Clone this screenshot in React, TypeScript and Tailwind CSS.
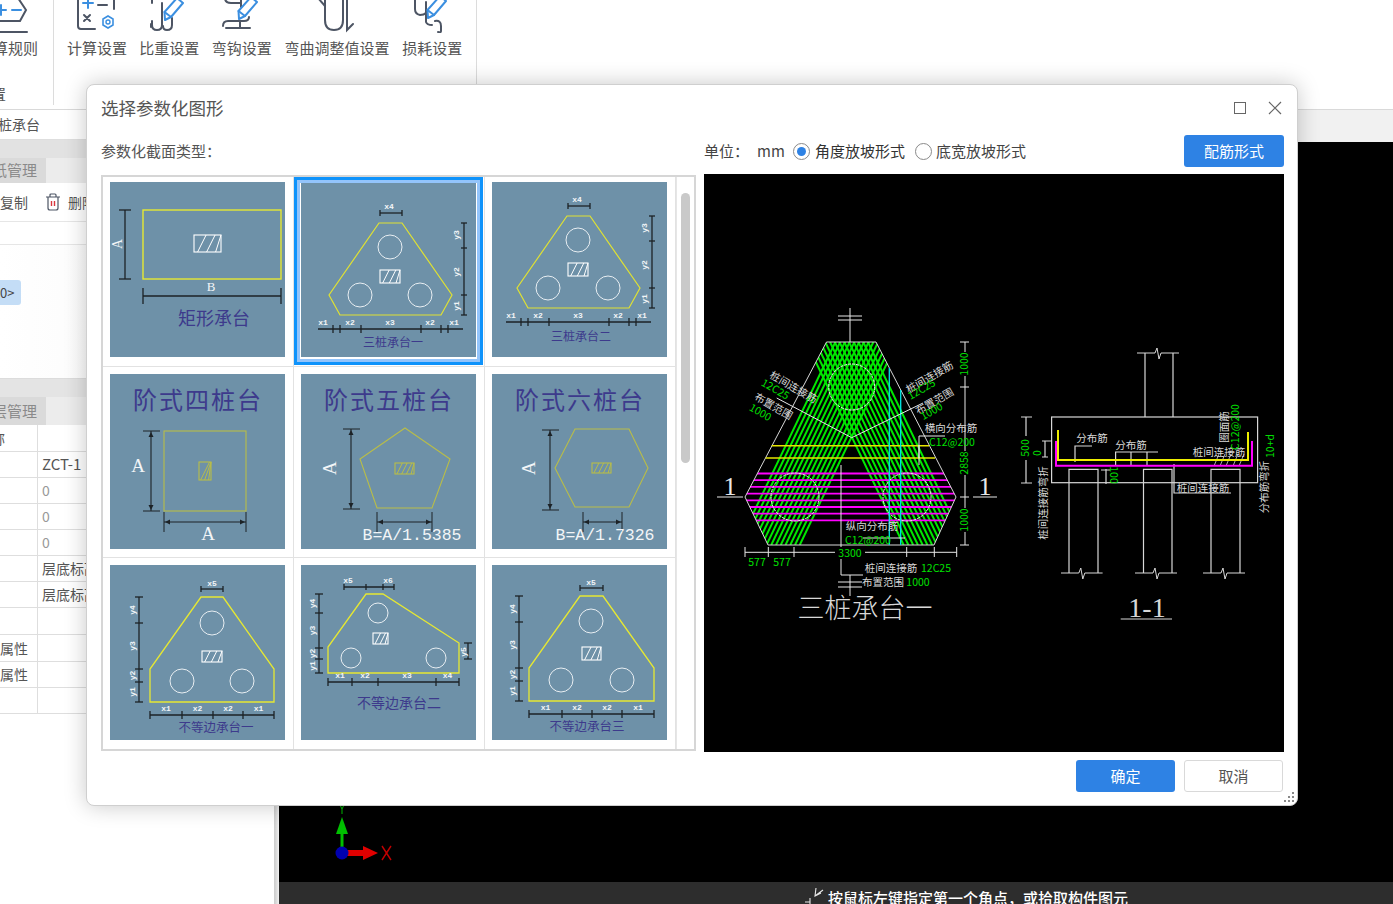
import React from 'react';

type Pt = [number, number];

const pts = (list: Pt[]) => list.map((p) => p.join(',')).join(' ');
const DIM = '#1c2226';
const TITLE = '#3d3a8c';
const SERIF = "'Liberation Serif','Noto Sans CJK SC',serif";
const MONO = "'Liberation Mono','Noto Sans CJK SC',monospace";

const Hatch = ({ x, y, w, h, color = '#fff', n = 3 }: { x: number; y: number; w: number; h: number; color?: string; n?: number }) => (
  <g stroke={color} fill="none">
    <rect x={x} y={y} width={w} height={h} strokeWidth={1.1} />
    {Array.from({ length: n }).map((_, i) => {
      const sx = x + ((i + 0.4) * w) / n;
      return <line key={i} x1={sx} y1={y + h} x2={Math.min(sx + h * 0.5, x + w)} y2={y} strokeWidth={1} />;
    })}
  </g>
);

const HDim = ({ xs, y, t = 6, x1, x2 }: { xs: number[]; y: number; t?: number; x1?: number; x2?: number }) => (
  <g stroke={DIM} strokeWidth={1.3}>
    <line x1={x1 ?? xs[0]} y1={y} x2={x2 ?? xs[xs.length - 1]} y2={y} />
    {xs.map((x) => (
      <line key={x} x1={x} y1={y - t} x2={x} y2={y + t} />
    ))}
  </g>
);

const VDim = ({ ys, x, t = 6 }: { ys: number[]; x: number; t?: number }) => (
  <g stroke={DIM} strokeWidth={1.3}>
    <line x1={x} y1={ys[0]} x2={x} y2={ys[ys.length - 1]} />
    {ys.map((y) => (
      <line key={y} x1={x - t} y1={y} x2={x + t} y2={y} />
    ))}
  </g>
);

const Small = ({ x, y, children, rot }: { x: number; y: number; children: React.ReactNode; rot?: boolean }) => (
  <text
    x={x}
    y={y}
    fontSize={8}
    fontWeight={700}
    fontFamily={MONO}
    fill="#f2f5f7"
    textAnchor="middle"
    dominantBaseline="middle"
    transform={rot ? `rotate(-90 ${x} ${y})` : undefined}
  >
    {children}
  </text>
);

const Title = ({ x, y, size, children }: { x: number; y: number; size: number; children: string }) => (
  <text x={x} y={y} fontSize={size} fill={TITLE} textAnchor="middle" dominantBaseline="middle">
    {children}
  </text>
);

const Tile = ({ children }: { children: React.ReactNode }) => (
  <svg viewBox="0 0 175 175" className="block h-[175px] w-[175px] bg-[#6e91a8]">
    {children}
  </svg>
);

const Circles = ({ list, r = 12 }: { list: Pt[]; r?: number }) => (
  <g fill="none" stroke="#e8eef2" strokeWidth={1}>
    {list.map(([cx, cy]) => (
      <circle key={cx} cx={cx} cy={cy} r={r} />
    ))}
  </g>
);

const RectTile = () => (
  <Tile>
    <rect x={33} y={28} width={138} height={69} fill="none" stroke="#e6e832" strokeWidth={1.4} />
    <Hatch x={84} y={53} w={27} h={17} />
    <VDim ys={[28, 97]} x={15} t={6} />
    <HDim xs={[33, 171]} y={114} t={8} />
    <text x={9} y={62} fontSize={14} fontFamily={SERIF} fill="#f2f5f7" textAnchor="middle" dominantBaseline="middle" transform="rotate(-90 9 62)">A</text>
    <text x={101} y={106} fontSize={13} fontFamily={SERIF} fill="#f2f5f7" textAnchor="middle" dominantBaseline="middle">B</text>
    <Title x={104} y={138} size={18}>矩形承台</Title>
  </Tile>
);

const ThreePile = ({ dx, dy, label }: { dx: number; dy: number; label: string }) => (
  <Tile>
    <g transform={`translate(${dx} ${dy})`}>
      <polygon points={pts([[78, 41], [101, 41], [151, 113], [140, 133], [39, 133], [28, 113]])} fill="none" stroke="#e0e232" strokeWidth={1.2} />
      <Circles list={[[89, 65], [59, 113], [119, 113]]} />
      <Hatch x={79} y={88} w={20} h={13} />
      <HDim xs={[79, 101]} y={31} t={3} />
      <Small x={88} y={25}>x4</Small>
      <VDim ys={[41, 66, 113, 133]} x={163} t={3} />
      <Small x={156} y={53} rot>y3</Small>
      <Small x={156} y={90} rot>y2</Small>
      <Small x={156} y={124} rot>y1</Small>
      <HDim xs={[32, 39, 60, 120, 140, 147]} y={147} t={4} x1={17} x2={162} />
      <Small x={22} y={141}>x1</Small>
      <Small x={49} y={141}>x2</Small>
      <Small x={89} y={141}>x3</Small>
      <Small x={129} y={141}>x2</Small>
      <Small x={153} y={141}>x1</Small>
    </g>
    <Title x={92 + dx} y={dy ? 156 : 162} size={12}>{label}</Title>
  </Tile>
);

const Arrow = ({ x1, y1, x2, y2 }: { x1: number; y1: number; x2: number; y2: number }) => {
  const vertical = x1 === x2;
  return (
    <g>
      <line x1={x1} y1={y1} x2={x2} y2={y2} stroke={DIM} strokeWidth={1.1} />
      {vertical ? (
        <>
          <polygon points={pts([[x1, y1 + 1], [x1 - 2.5, y1 + 6], [x1 + 2.5, y1 + 6]])} fill={DIM} />
          <polygon points={pts([[x2, y2 - 1], [x2 - 2.5, y2 - 6], [x2 + 2.5, y2 - 6]])} fill={DIM} />
        </>
      ) : (
        <>
          <polygon points={pts([[x1 + 1, y1], [x1 + 6, y1 - 2.5], [x1 + 6, y1 + 2.5]])} fill={DIM} />
          <polygon points={pts([[x2 - 1, y2], [x2 - 6, y2 - 2.5], [x2 - 6, y2 + 2.5]])} fill={DIM} />
        </>
      )}
    </g>
  );
};

const Stepped = ({ title, shape, hatch, tall, aRot, aX, hx, label }: {
  title: string;
  shape: React.ReactNode;
  hatch: React.ReactNode;
  tall: [number, number, number];
  aRot: boolean;
  aX: number;
  hx: [number, number];
  label: React.ReactNode;
}) => (
  <Tile>
    <text x={88} y={29} fontSize={24} fontFamily={SERIF} fill={TITLE} textAnchor="middle" dominantBaseline="middle" letterSpacing={2}>{title}</text>
    {shape}
    {hatch}
    <Arrow x1={tall[0]} y1={tall[1]} x2={tall[0]} y2={tall[2]} />
    <line x1={tall[0] - 8} y1={tall[1]} x2={tall[0] + 9} y2={tall[1]} stroke={DIM} />
    <line x1={tall[0] - 8} y1={tall[2]} x2={tall[0] + 9} y2={tall[2]} stroke={DIM} />
    <text x={aX} y={94} fontSize={19} fontFamily={SERIF} fill="#f2f5f7" textAnchor="middle" dominantBaseline="middle" transform={aRot ? `rotate(-90 ${aX} 94)` : undefined}>A</text>
    <Arrow x1={hx[0]} y1={148} x2={hx[1]} y2={148} />
    <line x1={hx[0]} y1={138} x2={hx[0]} y2={158} stroke={DIM} />
    <line x1={hx[1]} y1={138} x2={hx[1]} y2={158} stroke={DIM} />
    {label}
  </Tile>
);

const FormulaLabel = ({ children, x }: { children: string; x: number }) => (
  <text x={x} y={162} fontSize={16.5} fontFamily={MONO} fill="#f2f5f7" textAnchor="middle" dominantBaseline="middle">{children}</text>
);

const YELLOW_DIM = '#b9bd48';

const UnequalPile = ({ poly, circles, hatch, r = 12, top, left, bottom, title, titleAt, titleSize = 12.5, extra, topLabels, bottomLabels, leftLabels }: {
  poly: Pt[];
  circles: Pt[];
  hatch: [number, number, number, number];
  r?: number;
  top: { xs: number[]; y: number };
  left: { ys: number[]; x: number };
  bottom: { xs: number[]; y: number };
  title: string;
  titleAt: Pt;
  titleSize?: number;
  extra?: React.ReactNode;
  topLabels: [number, number, string][];
  bottomLabels: string[];
  leftLabels: string[];
}) => (
  <Tile>
    <polygon points={pts(poly)} fill="none" stroke="#e6e832" strokeWidth={1.3} />
    <Circles list={circles} r={r} />
    <Hatch x={hatch[0]} y={hatch[1]} w={hatch[2]} h={hatch[3]} />
    <HDim xs={top.xs} y={top.y} t={3} />
    {topLabels.map(([x, y, s]) => (
      <Small key={x} x={x} y={y}>{s}</Small>
    ))}
    <VDim ys={left.ys} x={left.x} t={4} />
    {leftLabels.map((s, i) => (
      <Small key={s + i} x={left.x - 6} y={(left.ys[i] + left.ys[i + 1]) / 2} rot>{s}</Small>
    ))}
    <HDim xs={bottom.xs} y={bottom.y} t={4} />
    {bottomLabels.map((s, i) => (
      <Small key={s + i} x={(bottom.xs[i] + bottom.xs[i + 1]) / 2} y={bottom.y - 6}>{s}</Small>
    ))}
    {extra}
    <Title x={titleAt[0]} y={titleAt[1]} size={titleSize}>{title}</Title>
  </Tile>
);

const tiles: React.ReactNode[] = [
  <RectTile key="rect" />,
  <ThreePile key="three1" dx={0} dy={0} label="三桩承台一" />,
  <ThreePile key="three2" dx={-3} dy={-7} label="三桩承台二" />,
  <Stepped
    key="four"
    title="阶式四桩台"
    shape={<rect x={54} y={57} width={82} height={80} fill="none" stroke={YELLOW_DIM} strokeWidth={1.1} />}
    hatch={<Hatch x={89} y={88} w={12} h={18} color={YELLOW_DIM} n={3} />}
    tall={[41, 57, 137]}
    aRot={false}
    aX={28}
    hx={[54, 136]}
    label={<text x={98} y={162} fontSize={19} fontFamily={SERIF} fill="#f2f5f7" textAnchor="middle" dominantBaseline="middle">A</text>}
  />,
  <Stepped
    key="five"
    title="阶式五桩台"
    shape={<polygon points={pts([[104, 54], [149, 85], [131, 134], [76, 134], [59, 85]])} fill="none" stroke={YELLOW_DIM} strokeWidth={1.1} />}
    hatch={<Hatch x={94} y={89} w={19} h={11} color={YELLOW_DIM} n={4} />}
    tall={[50, 55, 135]}
    aRot
    aX={31}
    hx={[76, 131]}
    label={<FormulaLabel x={111}>B=A/1.5385</FormulaLabel>}
  />,
  <Stepped
    key="six"
    title="阶式六桩台"
    shape={<polygon points={pts([[63, 94], [83, 55], [137, 55], [156, 94], [137, 133], [83, 133]])} fill="none" stroke={YELLOW_DIM} strokeWidth={1.1} />}
    hatch={<Hatch x={100} y={89} w={19} h={10} color={YELLOW_DIM} n={4} />}
    tall={[58, 56, 136]}
    aRot
    aX={39}
    hx={[91, 130]}
    label={<FormulaLabel x={113}>B=A/1.7326</FormulaLabel>}
  />,
  <UnequalPile
    key="un1"
    poly={[[91, 32], [113, 32], [164, 104], [164, 137], [40, 137], [40, 104]]}
    circles={[[102, 58], [72, 116], [132, 116]]}
    hatch={[92, 86, 20, 11]}
    top={{ xs: [91, 113], y: 24 }}
    topLabels={[[102, 19, 'x5']]}
    left={{ ys: [32, 58, 104, 117, 137], x: 29 }}
    leftLabels={['y4', 'y3', 'y2', 'y1']}
    bottom={{ xs: [40, 72, 103, 133, 164], y: 150 }}
    bottomLabels={['x1', 'x2', 'x2', 'x1']}
    title="不等边承台一"
    titleAt={[106, 164]}
  />,
  <UnequalPile
    key="un2"
    poly={[[65, 29], [82, 29], [158, 78], [158, 108], [27, 108], [27, 82]]}
    circles={[[77, 48], [50, 93], [135, 93]]}
    r={10}
    hatch={[72, 68, 15, 11]}
    top={{ xs: [43, 65, 82, 93], y: 22 }}
    topLabels={[[47, 16, 'x5'], [87, 16, 'x6']]}
    left={{ ys: [29, 48, 83, 94, 108], x: 18 }}
    leftLabels={['y4', 'y3', 'y2', 'y1']}
    bottom={{ xs: [27, 51, 77, 135, 158], y: 117 }}
    bottomLabels={['x1', 'x2', 'x3', 'x4']}
    title="不等边承台二"
    titleAt={[98, 139]}
    titleSize={14}
    extra={
      <g>
        <VDim ys={[78, 94]} x={167} t={4} />
        <Small x={163} y={87} rot>y5</Small>
      </g>
    }
  />,
  <UnequalPile
    key="un3"
    poly={[[88, 31], [111, 31], [162, 103], [162, 136], [37, 136], [37, 103]]}
    circles={[[99, 56], [69, 115], [130, 115]]}
    hatch={[90, 82, 19, 13]}
    top={{ xs: [88, 111], y: 23 }}
    topLabels={[[99, 18, 'x5']]}
    left={{ ys: [31, 57, 103, 116, 136], x: 27 }}
    leftLabels={['y4', 'y3', 'y2', 'y1']}
    bottom={{ xs: [37, 70, 100, 130, 162], y: 149 }}
    bottomLabels={['x1', 'x2', 'x2', 'x1']}
    title="不等边承台三"
    titleAt={[95, 163]}
  />,
];

// CAD preview, drawn in page coordinates so the numbers can be read off the reference
const CAD_GREEN = '#00e000';
const GText = ({ x, y, s = 10.5, rot = 0, color = CAD_GREEN, children }: { x: number; y: number; s?: number; rot?: number; color?: string; children: string }) => (
  <text
    x={x}
    y={rot ? y : y + 1.5}
    fontSize={s}
    fill={color}
    textAnchor="middle"
    dominantBaseline="middle"
    transform={rot ? `rotate(${rot} ${x} ${y})` : undefined}
  >
    {children}
  </text>
);
const WText = (props: { x: number; y: number; s?: number; rot?: number; children: string }) => <GText {...props} color="#d8d8d8" />;

const BreakLine = ({ x1, x2, y }: { x1: number; x2: number; y: number }) => {
  const m = (x1 + x2) / 2;
  return <path d={`M${x1} ${y}H${m - 3}l2 -5l2 11l2 -6H${x2}`} fill="none" stroke="#d8d8d8" strokeWidth={1} />;
};

const PlanDrawing = () => {
  const base = Array.from({ length: 14 }).map((_, i) => 738 + i * 4.75);
  const mags = Array.from({ length: 8 }).map((_, i) => 473.5 + i * 6.7);
  return (
    <g>
      <defs>
        <clipPath id="cap">
          <polygon points={pts([[826.5, 342], [876, 342], [956, 497], [934, 545], [768, 545], [745, 497]])} />
        </clipPath>
      </defs>
      <g clipPath="url(#cap)">
        {base.map((x) => (
          <g key={x} stroke="#00e800" strokeWidth={2}>
            <line x1={x} y1={545} x2={x + 97.4} y2={342} />
            <line x1={1703.4 - x} y1={545} x2={1703.4 - x - 97.4} y2={342} />
          </g>
        ))}
        {mags.map((y) => (
          <line key={y} x1={740} x2={960} y1={y} y2={y} stroke="#ff00ff" strokeWidth={1.8} />
        ))}
      </g>
      <polygon points={pts([[826.5, 342], [876, 342], [956, 497], [934, 545], [768, 545], [745, 497]])} fill="none" stroke="#d8d8d8" strokeWidth={1} />
      <g fill="none" stroke="#e8e8e8" strokeWidth={1} strokeDasharray="3 1">
        <circle cx={851.7} cy={387} r={23} />
        <circle cx={795} cy={497} r={24} />
        <circle cx={907} cy={497} r={24} />
      </g>
      <g stroke="#e6e600" strokeWidth={1.4}>
        <line x1={771.7} y1={445.7} x2={929} y2={445.7} />
        <line x1={765.7} y1={458} x2={935} y2={458} />
      </g>
      <g stroke="#00e8e8" strokeWidth={1.3}>
        <line x1={889.3} y1={368} x2={889.3} y2={545} />
        <line x1={900.7} y1={390} x2={900.7} y2={545} />
      </g>
      <g stroke="#e8e8e8" strokeWidth={1} fill="none">
        <path d="M776.7 398L851.7 437.7L923 403" />
        <path d="M850 308V342M838 316H862M838 320H862" />
        <path d="M841 465V575H863M838 582H862M838 587H862M850 575V596" />
        <path d="M919 465V436H945M919 445V458" />
        <path d="M863 538H905" />
        <path d="M745 552.3H956.7M745 547V557M768.3 547V557M794 547V557M906.7 547V557M934.3 547V557M956.7 547V557" />
        <path d="M965 342V545M960 342H969M960 387H969M960 497H969M960 545H969" />
        <path d="M717 497H743M973 497H997" />
      </g>
      <rect x={835} y={547} width={30} height={12} fill="#000" />
      <GText x={850} y={553}>3300</GText>
      <GText x={757} y={562}>577</GText>
      <GText x={782} y={562}>577</GText>
      <rect x={959} y={352} width={12} height={24} fill="#000" />
      <rect x={959} y={451} width={12} height={24} fill="#000" />
      <rect x={959} y={508} width={12} height={24} fill="#000" />
      <GText x={965} y={364} rot={-90}>1000</GText>
      <GText x={965} y={463} rot={-90}>2858</GText>
      <GText x={965} y={520} rot={-90}>1000</GText>
      <text x={730} y={489} fontSize={26} fontFamily={SERIF} fill="#e8e8e8" textAnchor="middle" dominantBaseline="middle">1</text>
      <text x={985} y={489} fontSize={26} fontFamily={SERIF} fill="#e8e8e8" textAnchor="middle" dominantBaseline="middle">1</text>
      <WText x={793} y={388} rot={30}>桩间连接筋</WText>
      <GText x={775} y={390} rot={30}>12C25</GText>
      <WText x={773} y={407} rot={30}>布置范围</WText>
      <GText x={760} y={413} rot={30}>1000</GText>
      <WText x={930} y={378} rot={-30}>桩间连接筋</WText>
      <GText x={922} y={390} rot={-30}>12C25</GText>
      <WText x={935} y={402} rot={-30}>布置范围</WText>
      <GText x={932} y={412} rot={-30}>1000</GText>
      <WText x={951} y={428}>横向分布筋</WText>
      <GText x={952} y={442}>C12@200</GText>
      <WText x={872} y={526}>纵向分布筋</WText>
      <GText x={868} y={540}>C12@200</GText>
      <WText x={891} y={568}>桩间连接筋</WText>
      <GText x={936} y={568}>12C25</GText>
      <WText x={883} y={582}>布置范围</WText>
      <GText x={918} y={582}>1000</GText>
      <text x={865} y={611} fontSize={27} fill="#d8d8d8" textAnchor="middle" dominantBaseline="middle" fontWeight={300}>三桩承台一</text>
    </g>
  );
};

const SectionDrawing = () => (
  <g>
    <g fill="none" stroke="#d8d8d8" strokeWidth={1.2}>
      <path d="M1145 353V417M1173 353V417" />
      <rect x={1051.6} y={417} width={206} height={65.7} />
      <path d="M1069 573V469.3H1098V573M1143.5 573V469.3H1172V573M1211 573V469.3H1240V573" />
      <path d="M1026 417V483M1021 417H1032M1021 483H1032M1045 441V457M1042 441H1051M1042 457H1048" />
      <path d="M1075 462V446H1092M1115.6 465V452H1158M1131 452V465M1147 452V465" />
      <path d="M1174 464V493H1231M1106 469V484M1101 470H1110" />
      <path d="M1120.7 619H1172" />
      <path d="M1214 466l5 -12M1220 466l5 -12M1226 466l5 -12M1233 466l5 -12M1239 466l5 -12" strokeWidth={0.8} />
    </g>
    <BreakLine x1={1137} x2={1179} y={353} />
    <BreakLine x1={1061} x2={1102.6} y={573} />
    <BreakLine x1={1135} x2={1177} y={573} />
    <BreakLine x1={1203} x2={1245} y={573} />
    <path d="M1056 441V465.7H1252V441" fill="none" stroke="#ff00ff" strokeWidth={2} />
    <path d="M1058 430V460H1248V432" fill="none" stroke="#eeee00" strokeWidth={2} />
    <rect x={1020} y={436} width={12} height={24} fill="#000" />
    <GText x={1026} y={448} rot={-90}>500</GText>
    <GText x={1038} y={453} rot={-90}>0</GText>
    <WText x={1044} y={503} rot={-90}>桩间连接筋弯折</WText>
    <WText x={1092} y={438}>分布筋</WText>
    <WText x={1131} y={445}>分布筋</WText>
    <WText x={1219} y={452}>桩间连接筋</WText>
    <WText x={1203} y={488}>桩间连接筋</WText>
    <WText x={1225} y={427} rot={-90}>圈面筋</WText>
    <GText x={1236.5} y={427} rot={-90}>C12@200</GText>
    <GText x={1271.6} y={446} rot={-90}>10+d</GText>
    <WText x={1265} y={487} rot={-90}>分布筋弯折</WText>
    <GText x={1113} y={475} rot={90}>100</GText>
    <text x={1147} y={611} fontSize={28} fontFamily={SERIF} fill="#d8d8d8" textAnchor="middle" dominantBaseline="middle">1-1</text>
  </g>
);

const GRAY = '#4d5564';
const BLUE = '#3b8fe0';

const Pencil = ({ x, y }: { x: number; y: number }) => (
  <g transform={`translate(${x} ${y})`} fill="none" stroke={BLUE} strokeWidth={2} strokeLinejoin="round">
    <path d="M0 18L-0.5 10L12 -4L18 1L6 15Z" />
    <path d="M-0.5 10L6 15" />
  </g>
);

const RibbonIcon = ({ w, children }: { w: number; children: React.ReactNode }) => (
  <svg width={w} height={33} viewBox={`0 0 ${w} 33`} className="block" fill="none" stroke={GRAY} strokeWidth={2} strokeLinecap="round">
    {children}
  </svg>
);

const ribbonItems: { label: string; w: number; icon: React.ReactNode }[] = [
  {
    label: '计算设置',
    w: 60,
    icon: (
      <>
        <path d="M11 -2V26Q11 29 14 29H28M47 -2V9" />
        <path d="M16 3H26M21 -2V8" stroke={BLUE} />
        <path d="M31 5H40" />
        <path d="M17 15L23 21M23 15L17 21" />
        <path d="M41 16L46 19V25L41 28L36 25V19Z" stroke={BLUE} strokeWidth={1.6} />
        <circle cx={41} cy={22} r={2} stroke={BLUE} strokeWidth={1.4} />
      </>
    ),
  },
  {
    label: '比重设置',
    w: 60,
    icon: (
      <>
        <path d="M13 0V3M13 21V25Q13 30 18 30Q23 30 23 25V3" />
        <path d="M12 24V27M33 18V25Q33 30 28 30Q24 30 24 26" />
        <Pencil x={26} y={2} />
      </>
    ),
  },
  {
    label: '弯钩设置',
    w: 60,
    icon: (
      <>
        <path d="M13 -2Q13 3 19 3H28M29 -2V7M11 26Q11 21 16 21H32Q37 21 37 17M28 21V28M14 28H38" />
        <Pencil x={27} y={1} />
      </>
    ),
  },
  {
    label: '弯曲调整值设置',
    w: 106,
    icon: (
      <>
        <path d="M41 -2V20Q41 30 50 30Q59 30 59 20V-2" />
        <path d="M63 -2V30L69 24" />
        <path d="M34 -2L41 6" />
      </>
    ),
  },
  {
    label: '损耗设置',
    w: 60,
    icon: (
      <>
        <path d="M13 -2V9Q13 14 18 15Q22 15 24 13" />
        <path d="M24 2V22Q25 25 30 25M33 21Q39 20 39 26V31Q39 33 36 32" />
        <Pencil x={26} y={0} />
      </>
    ),
  },
];

const tableRows: { a: string; b: string; h: string; muted?: boolean }[] = [
  { a: '称', b: '', h: 'h-[27px]' },
  { a: '', b: 'ZCT-1', h: 'h-[26px]' },
  { a: '', b: '0', h: 'h-[26px]', muted: true },
  { a: '', b: '0', h: 'h-[26px]', muted: true },
  { a: '', b: '0', h: 'h-[26px]', muted: true },
  { a: '', b: '层底标高', h: 'h-[26px]' },
  { a: '', b: '层底标高', h: 'h-[26px]' },
  { a: '', b: '', h: 'h-[27px]' },
  { a: '属性', b: '', h: 'h-[27px]' },
  { a: '属性', b: '', h: 'h-[26px]' },
  { a: '', b: '', h: 'h-[26px]' },
];

const Radio = ({ checked }: { checked?: boolean }) => (
  <span className="flex h-[17px] w-[17px] items-center justify-center rounded-full border border-[#8a8a8a] bg-white">
    {checked && <span className="h-[9px] w-[9px] rounded-full bg-[#2e82e4]" />}
  </span>
);

export default function App() {
  return (
    <div className="relative flex h-[904px] w-[1393px] flex-col overflow-hidden bg-white font-['Noto_Sans_CJK_SC','Noto_Sans',sans-serif] text-[#555]">
      {/* Ribbon */}
      <div className="flex h-[110px] shrink-0 border-b border-[#d9d9d9] bg-white">
        <div className="h-[105px] w-[54px] shrink-0 overflow-hidden border-r border-[#dcdcdc]">
          <svg width={54} height={33} viewBox="0 0 54 33" className="block" fill="none" stroke={GRAY} strokeWidth={2} strokeLinecap="round">
            <path d="M18 -2L26 10L20 21H-2" />
            <path d="M0 32H27" />
            <path d="M-3 10H6M1 5V15" stroke={BLUE} />
            <path d="M12 10H21" stroke={BLUE} />
          </svg>
          <div className="-ml-[7px] h-[30px] w-[60px] whitespace-nowrap text-[15px] leading-[30px]">算规则</div>
          <div className="-ml-[9px] mt-[16px] w-[60px] text-[15px] leading-[30px]">置</div>
        </div>
        <div className="flex h-[105px] items-start gap-[12.3px] border-r border-[#dcdcdc] pl-[13px] pr-[14px]">
          {ribbonItems.map((item) => (
            <div key={item.label} className="flex flex-col items-center">
              <RibbonIcon w={item.w}>{item.icon}</RibbonIcon>
              <span className="whitespace-nowrap text-[15px] leading-[30px]">{item.label}</span>
            </div>
          ))}
        </div>
      </div>

      <div className="flex min-h-0 flex-1">
        {/* Left property panel */}
        <div className="flex w-[275px] shrink-0 flex-col overflow-hidden border-r border-[#cfcfcf] bg-white">
          <div className="flex h-[30px] shrink-0 items-center whitespace-nowrap border-b border-[#dedede] bg-white text-[14px] -indent-[2px]">桩承台</div>
          <div className="h-[18px] shrink-0 bg-[#e2e2e2]" />
          <div className="flex h-[25px] shrink-0 bg-[#ececec]">
            <div className="flex w-[46px] items-center justify-end whitespace-nowrap bg-[#dadada] pr-[9px] text-[15px] text-[#8a8a8a]">纸管理</div>
          </div>
          <div className="flex h-[39px] shrink-0 items-center border-b border-[#e6e6e6] text-[14px]">
            <span className="w-[45px]">复制</span>
            <svg width={16} height={18} viewBox="0 0 16 18" fill="none" stroke={GRAY} strokeWidth={1.2}>
              <path d="M1 4H15M5 4V2Q5 1 6 1H10Q11 1 11 2V4M3 4V15Q3 17 5 17H11Q13 17 13 15V4" />
              <path d="M6.5 8V13M9.5 8V13" stroke="#d9363e" strokeWidth={1.4} />
            </svg>
            <span className="ml-[7px] whitespace-nowrap">删除</span>
          </div>
          <div className="h-[23px] shrink-0 border-b border-[#e6e6e6]" />
          <div className="flex h-[133px] shrink-0 flex-col bg-gradient-to-r from-white to-[#f6f6f6] pt-[35px]">
            <div className="flex h-[25px] w-[21px] items-center rounded-r-[3px] bg-[#c4ddf6] text-[13px] text-[#444]">0&gt;</div>
          </div>
          <div className="h-[19px] shrink-0 border-t border-[#dcdcdc] bg-[#e4e4e4]" />
          <div className="flex h-[28px] shrink-0 bg-[#ececec]">
            <div className="flex w-[46px] items-center justify-end whitespace-nowrap bg-[#dadada] pr-[9px] text-[15px] text-[#8a8a8a]">层管理</div>
          </div>
          {tableRows.map((row, i) => (
            <div key={i} className={`flex shrink-0 border-b border-[#dedede] text-[14px] ${row.h}`}>
              <div className="flex w-[38px] shrink-0 items-center overflow-hidden border-r border-[#dedede]">
                <span className={`whitespace-nowrap ${row.a === '称' ? '-ml-[9px]' : ''}`}>{row.a}</span>
              </div>
              <div className={`flex flex-1 items-center whitespace-nowrap pl-[4px] ${row.muted ? 'text-[#999]' : ''} ${row.b === 'ZCT-1' ? 'text-[15px]' : ''}`}>{row.b}</div>
            </div>
          ))}
        </div>
        <div className="w-[4px] shrink-0 bg-gradient-to-r from-[#cfcfcf] to-[#f2f2f2]" />

        {/* Drawing area */}
        <div className="flex min-w-0 flex-1 flex-col">
          <div className="h-[32px] shrink-0 bg-[#f1f1f1]" />
          <div className="flex min-h-0 flex-1 items-end bg-black pb-[16px] pl-[49px]">
            <svg width={70} height={66} viewBox="328 800 70 66">
              <line x1={342} y1={850} x2={342} y2={830} stroke="#00c000" strokeWidth={3} />
              <polygon points="342,817 336,834 348,834" fill="#00c000" />
              <path d="M339 803L342 809L345 803M342 809V814" fill="none" stroke="#00c000" />
              <rect x={345} y={850} width={20} height={6} fill="#e00000" />
              <polygon points="378,853 363,846 363,860" fill="#e00000" />
              <ellipse cx={342} cy={853} rx={6.5} ry={6.5} fill="#0000b0" />
              <path d="M382 846L391 860M391 846L382 860" stroke="#c00000" strokeWidth={1.4} />
            </svg>
          </div>
          <div className="flex h-[22px] shrink-0 items-start bg-[#2d2d2d] pl-[525px] pt-[6px]">
            <svg width={22} height={16} viewBox="0 0 22 16" fill="none" stroke="#e8e8e8" strokeWidth={1.1} className="mr-[2px] shrink-0">
              <path d="M12 0L11 8L17 5M11 8L19 2" />
              <path d="M1 14H6V10M6 14V18" />
            </svg>
            <span className="whitespace-nowrap text-[15px] font-medium leading-[20px] text-white">按鼠标左键指定第一个角点，或拾取构件图元</span>
          </div>
        </div>
      </div>

      {/* Dialog */}
      <div className="absolute left-[86px] top-[84px] z-10 flex h-[722px] w-[1212px] flex-col rounded-[8px] border border-[#cfcfcf] bg-white shadow-[0_0_22px_rgba(0,0,0,0.22)]">
        <div className="flex h-[46px] shrink-0 items-center justify-between pl-[14px] pr-[14px]">
          <span className="text-[17.5px] text-[#555]">选择参数化图形</span>
          <div className="flex items-center gap-[21px]">
            <span className="h-[12px] w-[12px] border border-[#666]" />
            <svg width={16} height={16} viewBox="0 0 16 16" fill="none" stroke="#666" strokeWidth={1.2}>
              <path d="M2 2L14 14M14 2L2 14" />
            </svg>
          </div>
        </div>

        <div className="grid grid-cols-[595px_580px] gap-x-[8px] pl-[14px]">
          <div className="flex h-[43px] items-center pb-[3px] text-[15px] text-[#555]">参数化截面类型：</div>
          <div className="flex h-[43px] items-center pb-[3px] text-[15px] text-[#444]">
            <span className="w-[53px]">单位：</span>
            <span className="w-[36px]">mm</span>
            <Radio checked />
            <span className="ml-[5px] w-[100px] text-[#333]">角度放坡形式</span>
            <Radio />
            <span className="ml-[4px]">底宽放坡形式</span>
            <button className="ml-auto h-[32px] w-[100px] rounded-[3px] bg-[#2e82e4] text-[15px] text-white">配筋形式</button>
          </div>

          {/* Shape picker */}
          <div className="mt-[1px] flex h-[576px] overflow-hidden border-2 border-[#d6d6d6]">
            <div className="-mt-[2px] grid h-[575px] w-[573px] shrink-0 grid-cols-[191px_191px_191px] auto-rows-[191.5px]">
              {tiles.map((tile, i) => (
                <div key={i} className="relative border-b border-r border-[#e2e2e2] pl-[7px] pt-[7px]">
                  {tile}
                  {i === 1 && (
                    <div className="absolute bottom-[1px] left-0 right-[1px] top-[2px] border-[3px] border-[#0f93fb]">
                      <div className="h-full w-full border-[3px] border-[#93c4fb]" />
                    </div>
                  )}
                </div>
              ))}
            </div>
            <div className="flex-1 border-l border-[#e6e6e6] px-[4px] pt-[16px]">
              <div className="h-[270px] w-full rounded-[5px] bg-[#c9c9c9]" />
            </div>
          </div>

          {/* Preview */}
          <div className="h-[578px] bg-black">
            <svg viewBox="704 174 580 578" className="block h-[578px] w-[580px]">
              <PlanDrawing />
              <SectionDrawing />
            </svg>
          </div>
        </div>

        <div className="flex flex-1 items-start justify-end gap-[9px] pr-[14px] pt-[8px]">
          <button className="h-[32px] w-[99px] rounded-[3px] bg-[#2e82e4] text-[15px] text-white">确定</button>
          <button className="h-[32px] w-[99px] rounded-[3px] border border-[#d9d9d9] bg-white text-[15px] text-[#555]">取消</button>
        </div>

        <svg width={11} height={11} viewBox="0 0 11 11" className="absolute bottom-[2px] right-[2px]" fill="#888">
          <rect x={8} y={0} width={2} height={2} />
          <rect x={4} y={4} width={2} height={2} />
          <rect x={8} y={4} width={2} height={2} />
          <rect x={0} y={8} width={2} height={2} />
          <rect x={4} y={8} width={2} height={2} />
          <rect x={8} y={8} width={2} height={2} />
        </svg>
      </div>
    </div>
  );
}
